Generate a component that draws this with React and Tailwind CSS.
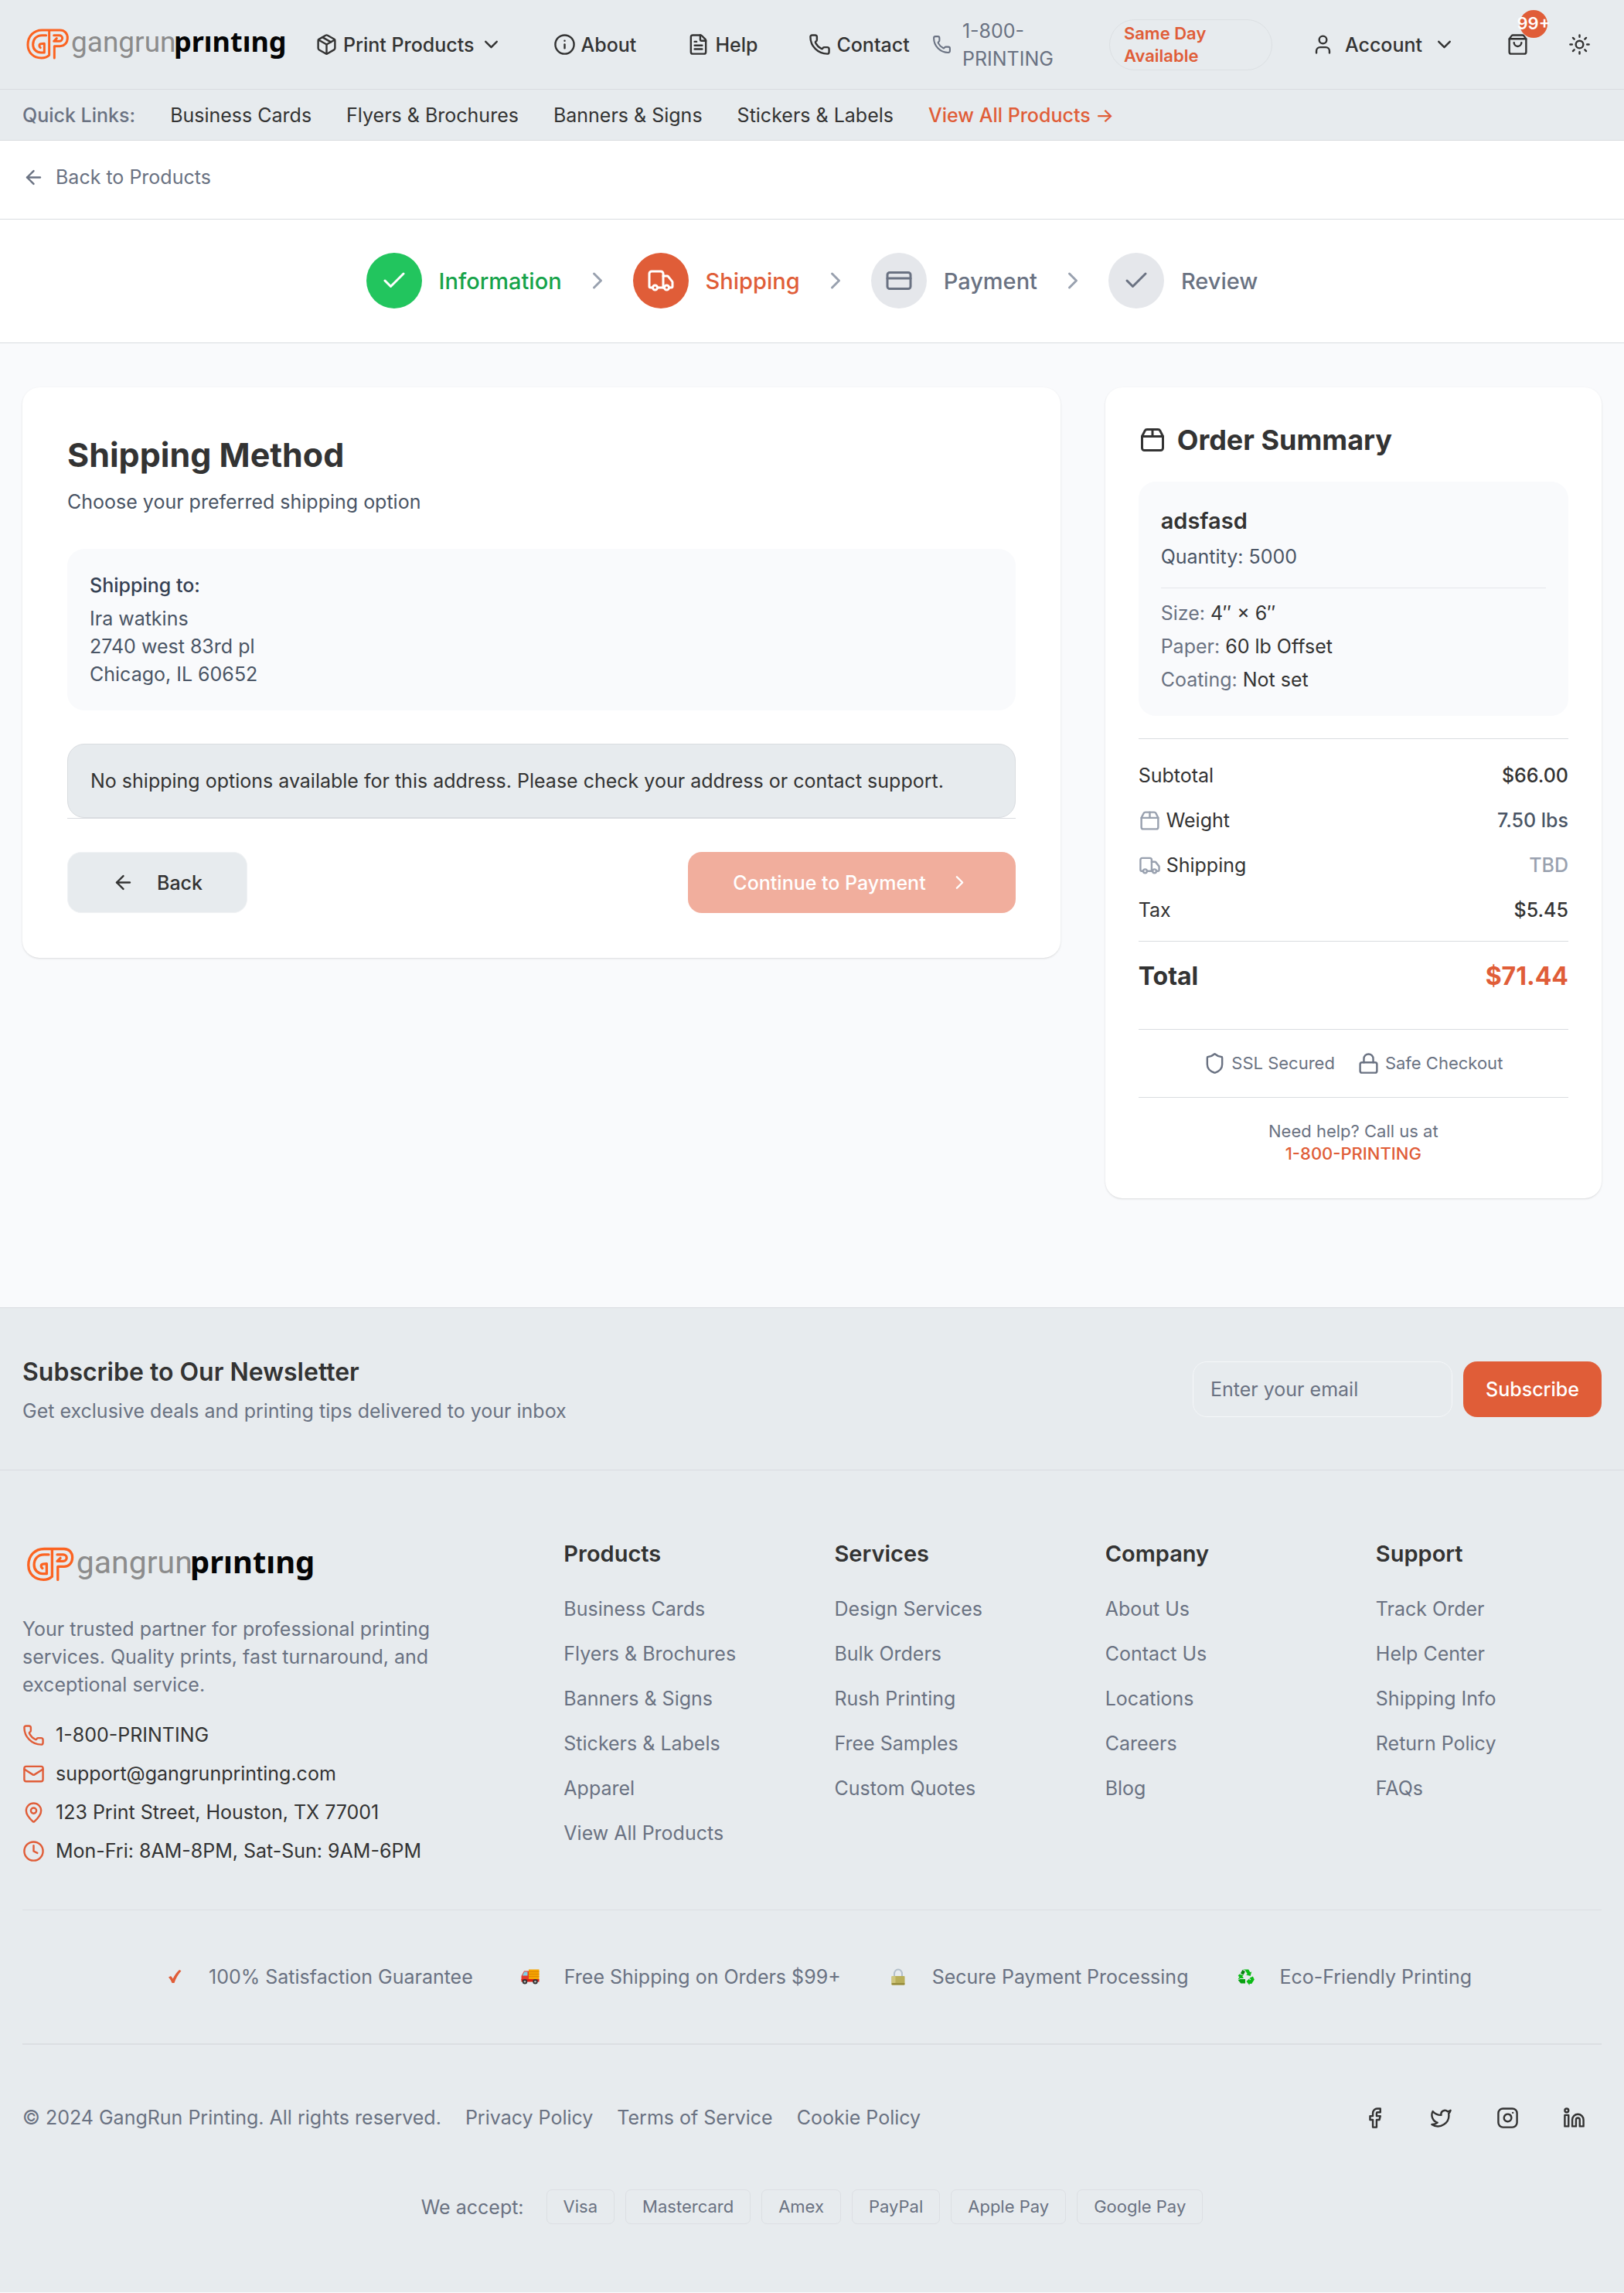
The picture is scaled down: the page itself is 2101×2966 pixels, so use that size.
import React from "react";
import {
  ArrowLeft,
  Check,
  ChevronDown,
  ChevronRight,
  Clock,
  CreditCard,
  Facebook,
  FileText,
  Info,
  Instagram,
  Linkedin,
  Lock,
  Mail,
  MapPin,
  Package,
  Phone,
  Shield,
  ShoppingBag,
  Sun,
  Truck,
  Twitter,
  User,
} from "lucide-react";

const icon = "size-[29px] shrink-0";

function Logo({ className }) {
  return (
    <svg viewBox="0 0 344 65" className={className} role="img" aria-label="GangRun Printing">
      <g
        transform="translate(-4 -2) scale(0.3333)"
        fill="none"
        stroke="#fb6321"
        strokeWidth="9"
        strokeLinecap="round"
        strokeLinejoin="round"
      >
        <path d="M116 50V145Q104 156 86 156C55 156 33 135 33 105C33 70 57 48 88 48H158C176 48 187 61 187 78C187 96 176 110 158 110H136V156" />
        <path d="M104 68H88C66 68 53 83 53 104C53 123 67 135 84 135H97V100L84 101C76 102 76 112 82 116" />
        <path d="M134 68H155C162 68 167 73 167 79C167 86 162 91 155 91H134L145 80" />
      </g>
      <text x="63" y="42" fill="#8c8c8c" className="font-[Roboto,sans-serif] text-[37px] font-normal">gangrun</text>
      <text x="196" y="42" fill="#050505" className="font-['Noto_Sans',sans-serif] text-[36px] font-bold">prıntıng</text>
    </svg>
  );
}

function BoxIcon({ className }) {
  return (
    <svg viewBox="0 0 24 24" fill="none" stroke="currentColor" strokeWidth="2" strokeLinecap="round" strokeLinejoin="round" className={className} aria-hidden="true">
      <path d="M3 9h18v10a2 2 0 0 1-2 2H5a2 2 0 0 1-2-2V9Z" />
      <path d="m3 9 2.45-4.9A2 2 0 0 1 7.24 3h9.52a2 2 0 0 1 1.8 1.1L21 9" />
      <path d="M12 3v6" />
    </svg>
  );
}

function TickMark() {
  return (
    <svg viewBox="0 0 24 24" className="size-6" aria-hidden="true">
      <path d="M4 12.500 7 11c1.200 1 2 2.200 2.700 3.600C11.800 10 14.500 6 18 3L20.500 4.300C16.500 8.800 13.500 14 11.500 20H8.500C7.400 17.200 6 14.600 4 12.500Z" fill="#e05d38" />
    </svg>
  );
}

function DeliveryTruck() {
  return (
    <svg viewBox="0 0 24 20" className="h-5 w-6" aria-hidden="true">
      <rect x="10" y="0.500" width="13.500" height="13" fill="#f5a300" />
      <path d="M10 3.500h13.500M10 6.500h13.500M10 9.500h13.500" stroke="#d98200" strokeWidth="0.800" />
      <path d="M4 2.500h6V14H0.500V9Z" fill="#e23a2c" />
      <path d="M4.300 3.500H8.500V8.500H1.800Z" fill="#7fd0e6" />
      <rect x="0.500" y="13" width="23" height="3.500" fill="#d81f16" />
      <circle cx="5" cy="16.300" r="3.200" fill="#333" />
      <circle cx="5" cy="16.300" r="1.300" fill="#bbb" />
      <circle cx="18.500" cy="16.300" r="3.200" fill="#333" />
      <circle cx="18.500" cy="16.300" r="1.300" fill="#bbb" />
    </svg>
  );
}

function Padlock() {
  return (
    <svg viewBox="0 0 18 22" className="h-[22px] w-[18px]" aria-hidden="true">
      <path d="M4 10V7a5 5.500 0 0 1 10 0v3" fill="none" stroke="#b3bfca" strokeWidth="2" />
      <rect x="0.500" y="10" width="17" height="11.500" rx="1" fill="#b9af5a" />
      <rect x="0.500" y="10" width="5" height="11.500" rx="1" fill="#cfc67d" />
      <rect x="0.500" y="19" width="17" height="2.500" rx="1" fill="#978d3f" />
    </svg>
  );
}

function RecycleMark() {
  return (
    <svg viewBox="0 0 24 24" className="size-6" aria-hidden="true">
      <g fill="#0cbb16">
        <path d="M8 2.500h7.200l2.300 3.800 1.700-1-1.500 5.700-5.700-1.500 1.800-1-2.800-4.700Z" />
        <path d="M7.400 3 11 5.300 8.500 9.600 4.900 7.400Z" fill="#07820f" />
        <path d="M3.200 8.600 8.800 10 7.300 11.200 9 14H4.600L1.500 15.500l2-3.600-1.800-1Z" />
        <path d="M1.800 16.200 4.500 15H11v5.500H5.200Z" fill="#07a010" />
        <path d="M20.800 11.500 22.800 15.500 19.300 21H16.500v2L12.500 18l4-4v2.200l1.800-.2-1.500-2.500Z" />
      </g>
    </svg>
  );
}

function NavItem({ children }) {
  return (
    <a href="#" className="flex items-center gap-[7px] whitespace-nowrap font-medium">
      {children}
    </a>
  );
}

function Header() {
  return (
    <header className="border-b border-[#d9dce0] bg-[#e7ebee]">
      <div className="flex h-[115px] items-center px-[29px]">
        <a href="#" className="shrink-0">
          <Logo className="h-[65px] w-auto" />
        </a>
        <nav className="ml-[35px] flex items-center gap-[66px]">
          <button type="button" className="flex items-center gap-[7px] whitespace-nowrap font-medium">
            <Package className={icon} />
            Print Products
            <ChevronDown className={icon} />
          </button>
          <NavItem><Info className={icon} />About</NavItem>
          <NavItem><FileText className={icon} />Help</NavItem>
          <NavItem><Phone className={icon} />Contact</NavItem>
        </nav>
        <div className="ml-auto flex items-center gap-[29px]">
          <div className="flex w-[200px] items-center gap-[14px] text-gray-500">
            <Phone className="size-[25px] shrink-0" />
            <span>1-800-PRINTING</span>
          </div>
          <div className="w-[211px] rounded-[33px] border border-[#dce0e3] px-[18px] py-[3px] text-[22px] leading-[29px] font-semibold text-[#e05d38]">
            Same Day
            <br />
            Available
          </div>
          <button type="button" className="flex items-center gap-[14px] px-[22px] font-medium">
            <User className={icon} />
            Account
            <ChevronDown className={icon} />
          </button>
          <div className="flex items-center gap-[22px]">
            <button type="button" aria-label="Cart" className="relative flex size-[58px] items-center justify-center">
              <ShoppingBag className={icon} />
              <span className="absolute -top-4 -right-[10px] flex size-9 items-center justify-center rounded-full bg-[#e05d38] text-[22px] leading-[29px] font-semibold text-white">
                99+
              </span>
            </button>
            <button type="button" aria-label="Toggle theme" className="flex size-[58px] items-center justify-center">
              <Sun className={icon} />
            </button>
          </div>
        </div>
      </div>
      <nav className="flex items-center gap-[45px] border-t border-[#d9dce0] px-[29px] pt-[15px] pb-[14px]">
        <span className="font-medium text-gray-500">Quick Links:</span>
        <a href="#">Business Cards</a>
        <a href="#">Flyers &amp; Brochures</a>
        <a href="#">Banners &amp; Signs</a>
        <a href="#">Stickers &amp; Labels</a>
        <a href="#" className="font-medium text-[#e05d38]">View All Products →</a>
      </nav>
    </header>
  );
}

const steps = [
  { label: "Information", Icon: Check, circle: "bg-[#22c55e] text-white", text: "text-[#16a34a]" },
  { label: "Shipping", Icon: Truck, circle: "bg-[#e05d38] text-white", text: "text-[#e05d38]" },
  { label: "Payment", Icon: CreditCard, circle: "bg-gray-200 text-gray-500", text: "text-gray-500" },
  { label: "Review", Icon: Check, circle: "bg-gray-200 text-gray-500", text: "text-gray-500" },
];

function Stepper() {
  return (
    <ol className="flex items-center justify-center gap-[28px] border-b border-[#d9dce0] bg-white pt-[43px] pb-[44px]">
      {steps.map(({ label, Icon, circle, text }, i) => (
        <React.Fragment key={label}>
          {i > 0 && (
            <li aria-hidden="true">
              <ChevronRight className="size-9 text-gray-400" />
            </li>
          )}
          <li className="flex items-center gap-[22px]">
            <span className={"flex size-[72px] items-center justify-center rounded-full " + circle}>
              <Icon className="size-9" />
            </span>
            <span className={"text-[29px] leading-[43px] font-medium " + text}>{label}</span>
          </li>
        </React.Fragment>
      ))}
    </ol>
  );
}

function ShippingMethod() {
  return (
    <section className="col-span-2 rounded-[22px] bg-white p-[58px] shadow-sm">
      <h1 className="text-[43px] leading-[58px] font-bold">Shipping Method</h1>
      <p className="mt-[14px] text-gray-600">Choose your preferred shipping option</p>
      <div className="mt-[43px] rounded-[22px] bg-[#f9fafc] p-[29px] text-gray-600">
        <p className="mb-[7px] font-medium text-gray-700">Shipping to:</p>
        <p>Ira watkins</p>
        <p>2740 west 83rd pl</p>
        <p>Chicago, IL 60652</p>
      </div>
      <div role="alert" className="mt-[43px] rounded-[22px] border border-[#d9dce0] bg-[#e7ebee] p-[29px]">
        No shipping options available for this address. Please check your address or contact support.
      </div>
      <div className="flex justify-between border-t border-[#d9dce0] pt-[43px]">
        <button type="button" className="flex h-[79px] items-center gap-[29px] rounded-[18px] border border-[#f0f2f4] bg-[#e7ebee] px-[57px] font-medium">
          <ArrowLeft className={icon} />
          Back
        </button>
        <button type="button" disabled className="flex h-[79px] items-center gap-[29px] rounded-[18px] bg-[#f1ae9d] px-[58px] font-medium text-white">
          Continue to Payment
          <ChevronRight className={icon} />
        </button>
      </div>
    </section>
  );
}

function Row({ label, value, Icon, tone = "" }) {
  return (
    <div className="flex justify-between">
      <dt className="flex items-center gap-[7px]">
        {Icon && <Icon className="size-[29px] shrink-0 text-gray-400" />}
        {label}
      </dt>
      <dd className={"font-medium " + tone}>{value}</dd>
    </div>
  );
}

function OrderSummary() {
  return (
    <aside className="rounded-[22px] bg-white p-[43px] shadow-sm">
      <h2 className="flex items-center gap-[14px] text-[36px] leading-[50px] font-bold">
        <BoxIcon className="size-9" />
        Order Summary
      </h2>
      <div className="mt-[29px] rounded-[22px] bg-[#f9fafc] p-[29px]">
        <h3 className="text-[29px] leading-[43px] font-semibold">adsfasd</h3>
        <p className="mt-[7px] text-gray-600">Quantity: 5000</p>
        <dl className="mt-[22px] space-y-[7px] border-t border-gray-200 pt-[14px]">
          <div className="flex gap-[7px]"><dt className="text-gray-500">Size:</dt><dd>4″ × 6″</dd></div>
          <div className="flex gap-[7px]"><dt className="text-gray-500">Paper:</dt><dd>60 lb Offset</dd></div>
          <div className="flex gap-[7px]"><dt className="text-gray-500">Coating:</dt><dd>Not set</dd></div>
        </dl>
      </div>
      <dl className="mt-[29px] space-y-[22px] border-t border-[#d9dce0] pt-[29px]">
        <Row label="Subtotal" value="$66.00" />
        <Row label="Weight" value="7.50 lbs" Icon={BoxIcon} tone="text-gray-600" />
        <Row label="Shipping" value="TBD" Icon={Truck} tone="text-gray-400" />
        <Row label="Tax" value="$5.45" />
        <div className="flex justify-between border-t border-[#d9dce0] pt-5 text-[32px] leading-[50px] font-bold">
          <dt>Total</dt>
          <dd className="text-[#e05d38]">$71.44</dd>
        </div>
      </dl>
      <div className="mt-[43px] flex items-center justify-center gap-[29px] border-t border-[#d9dce0] py-[29px] text-[22px] leading-[29px] text-gray-500">
        <span className="flex items-center gap-[7px]"><Shield className={icon} />SSL Secured</span>
        <span className="flex items-center gap-[7px]"><Lock className={icon} />Safe Checkout</span>
      </div>
      <div className="border-t border-[#d9dce0] pt-[29px] text-center text-[22px] leading-[29px] text-gray-500">
        <p>Need help? Call us at</p>
        <a href="#" className="font-medium text-[#e05d38]">1-800-PRINTING</a>
      </div>
    </aside>
  );
}

const linkColumns = [
  { title: "Products", links: ["Business Cards", "Flyers & Brochures", "Banners & Signs", "Stickers & Labels", "Apparel", "View All Products"] },
  { title: "Services", links: ["Design Services", "Bulk Orders", "Rush Printing", "Free Samples", "Custom Quotes"] },
  { title: "Company", links: ["About Us", "Contact Us", "Locations", "Careers", "Blog"] },
  { title: "Support", links: ["Track Order", "Help Center", "Shipping Info", "Return Policy", "FAQs"] },
];

const contacts = [
  { Icon: Phone, text: "1-800-PRINTING" },
  { Icon: Mail, text: "support@gangrunprinting.com" },
  { Icon: MapPin, text: "123 Print Street, Houston, TX 77001" },
  { Icon: Clock, text: "Mon-Fri: 8AM-8PM, Sat-Sun: 9AM-6PM" },
];

const promises = [
  { Mark: TickMark, text: "100% Satisfaction Guarantee" },
  { Mark: DeliveryTruck, text: "Free Shipping on Orders $99+" },
  { Mark: Padlock, text: "Secure Payment Processing" },
  { Mark: RecycleMark, text: "Eco-Friendly Printing" },
];

const socials = [
  { Icon: Facebook, name: "Facebook" },
  { Icon: Twitter, name: "Twitter" },
  { Icon: Instagram, name: "Instagram" },
  { Icon: Linkedin, name: "LinkedIn" },
];

const payments = ["Visa", "Mastercard", "Amex", "PayPal", "Apple Pay", "Google Pay"];

function Footer() {
  return (
    <footer className="border-t border-[#d9dce0] bg-[#e7ebee]">
      <div className="flex items-center justify-between border-b border-[#d9dce0] px-[29px] py-[58px]">
        <div>
          <h2 className="text-[32px] leading-[50px] font-semibold">Subscribe to Our Newsletter</h2>
          <p className="mt-[7px] text-gray-500">Get exclusive deals and printing tips delivered to your inbox</p>
        </div>
        <form className="flex gap-[14px]" onSubmit={(e) => e.preventDefault()}>
          <input
            type="email"
            aria-label="Email address"
            placeholder="Enter your email"
            className="h-[72px] w-[336px] rounded-[18px] border border-[#f5f7f9] bg-transparent px-[22px] placeholder:text-gray-500"
          />
          <button type="submit" className="h-[72px] rounded-[18px] bg-[#e05d38] px-[29px] font-medium text-white">
            Subscribe
          </button>
        </form>
      </div>

      <div className="px-[29px] pt-[86px] pb-[88px]">
        <div className="grid grid-cols-6 gap-[58px]">
          <div className="col-span-2">
            <Logo className="h-[72px] w-auto" />
            <p className="mt-[29px] max-w-[576px] text-gray-500">
              Your trusted partner for professional printing services. Quality prints, fast turnaround, and exceptional service.
            </p>
            <ul className="mt-[29px] space-y-[14px]">
              {contacts.map(({ Icon, text }) => (
                <li key={text} className="flex items-center gap-[14px]">
                  <Icon className="size-[29px] shrink-0 text-[#e05d38]" />
                  {text}
                </li>
              ))}
            </ul>
          </div>
          {linkColumns.map(({ title, links }) => (
            <div key={title}>
              <h3 className="mb-[29px] text-[29px] leading-[43px] font-semibold">{title}</h3>
              <ul className="space-y-[15px] leading-[43px] text-gray-500">
                {links.map((l) => (
                  <li key={l}><a href="#">{l}</a></li>
                ))}
              </ul>
            </div>
          ))}
        </div>

        <ul className="mt-[58px] flex items-center justify-center gap-[45px] border-t border-b-2 border-[#dcdfe3] py-[68px] text-gray-500">
          {promises.map(({ Mark, text }) => (
            <li key={text} className="flex items-center gap-[14px]">
              <span className="flex w-[59px] items-center justify-center"><Mark /></span>
              {text}
            </li>
          ))}
        </ul>

        <div className="mt-[58px] flex items-center justify-between text-gray-500">
          <div className="flex gap-[31px]">
            <span>© 2024 GangRun Printing. All rights reserved.</span>
            <a href="#">Privacy Policy</a>
            <a href="#">Terms of Service</a>
            <a href="#">Cookie Policy</a>
          </div>
          <div className="flex gap-[14px]">
            {socials.map(({ Icon, name }) => (
              <a key={name} href="#" aria-label={name} className="flex size-[72px] items-center justify-center text-[#333]">
                <Icon className={icon} />
              </a>
            ))}
          </div>
        </div>

        <div className="mt-[57px] flex items-center justify-center gap-[29px] text-gray-500">
          <span>We accept:</span>
          <ul className="flex gap-[14px]">
            {payments.map((p) => (
              <li key={p} className="rounded-[7px] border border-[#dcdfe3] px-[21px] py-[7px] text-[22px] leading-[29px]">{p}</li>
            ))}
          </ul>
        </div>
      </div>
    </footer>
  );
}

export default function App() {
  return (
    <div className="min-h-screen bg-[#f9fafc] font-[Inter,sans-serif] text-[25px] leading-[36px] text-[#333]">
      <Header />
      <div className="border-b border-[#d9dce0] bg-white px-[29px] pt-[29px] pb-[36px]">
        <a href="#" className="inline-flex items-center gap-[14px] align-top text-gray-500">
          <ArrowLeft className={icon} />
          Back to Products
        </a>
      </div>
      <Stepper />
      <main className="grid grid-cols-3 items-start gap-[58px] px-[29px] pt-[57px] pb-[141px]">
        <ShippingMethod />
        <OrderSummary />
      </main>
      <Footer />
    </div>
  );
}
